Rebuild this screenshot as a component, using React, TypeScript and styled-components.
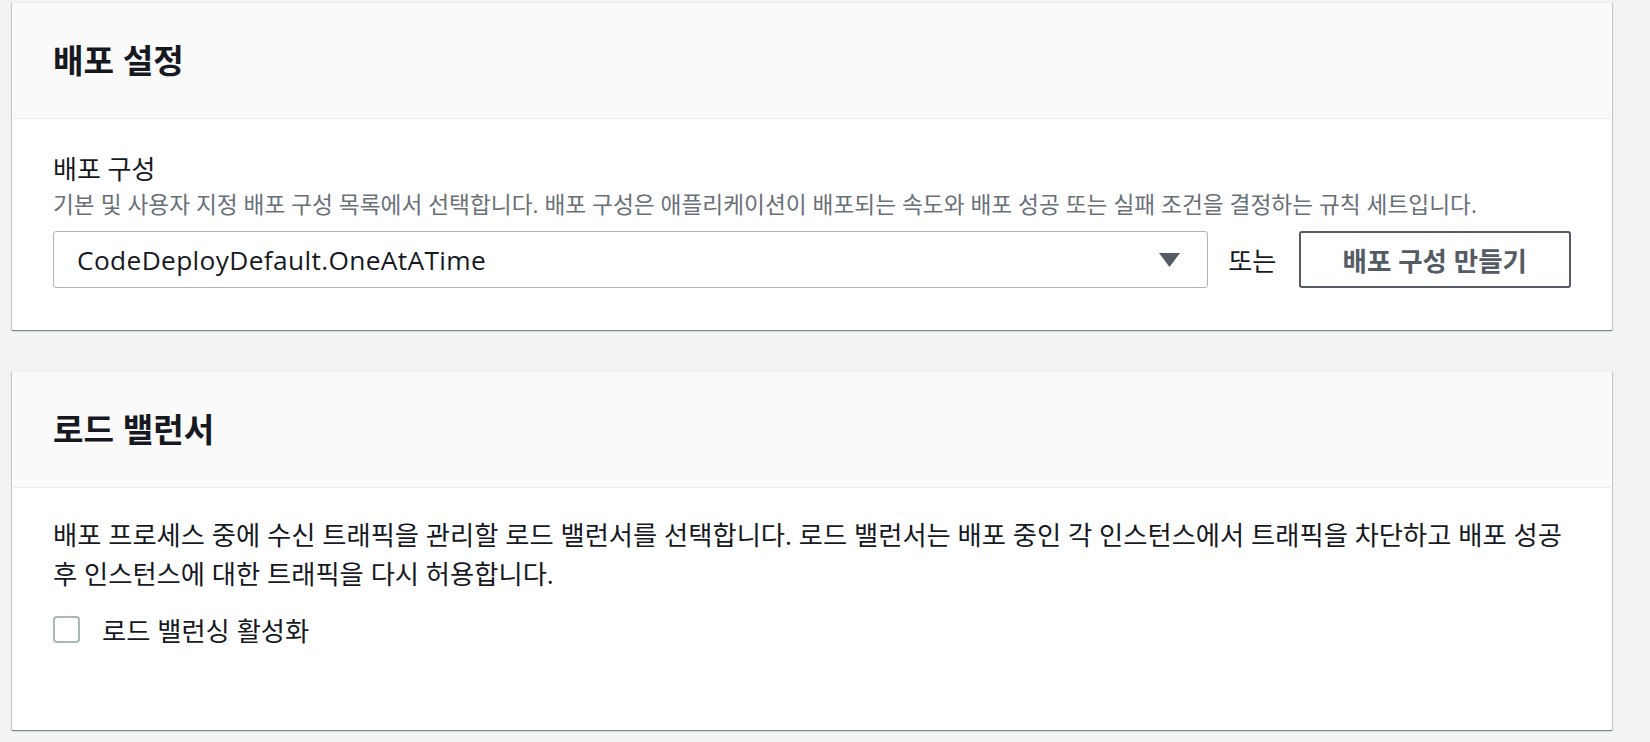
import styled, { createGlobalStyle } from 'styled-components';

const GlobalStyle = createGlobalStyle`
  html, body {
    margin: 0;
    background: #f2f3f3;
  }
  body {
    font-family: 'Open Sans', 'Noto Sans CJK KR', sans-serif;
    color: #16191f;
    word-break: keep-all;
  }
`;

const Page = styled.main`
  display: flex;
  flex-direction: column;
  gap: 41px;
  width: 1600px;
  padding: 2px 0 12px 12px;
`;

const Panel = styled.section`
  background: #fff;
  border-top: 1px solid #eaeded;
  box-shadow: 0 1px 1px 0 rgba(0, 28, 36, 0.3),
    1px 1px 1px 0 rgba(0, 28, 36, 0.15),
    -1px 1px 1px 0 rgba(0, 28, 36, 0.15);
`;

const PanelHeader = styled.header`
  background: #fafafa;
  border-bottom: 1px solid #eaeded;
  padding: 37.5px 41px;

  h2 {
    margin: 0;
    font-size: 33.2px;
    line-height: 40px;
    font-weight: 700;
    color: #16191f;
  }
`;

const PanelBody = styled.div<{ $top: number; $bottom: number }>`
  padding: ${(p) => p.$top}px 41px ${(p) => p.$bottom}px;
`;

const Label = styled.div`
  font-size: 26px;
  line-height: 36px;
`;

const Description = styled.div`
  margin-top: 4px;
  font-size: 22.7px;
  line-height: 28px;
  color: #687078;
`;

const FieldRow = styled.div`
  display: flex;
  align-items: center;
  margin-top: 12px;
`;

const Select = styled.div`
  flex: 1;
  display: flex;
  align-items: center;
  justify-content: space-between;
  height: 57px;
  box-sizing: border-box;
  padding: 0 27px 0 23px;
  border: 1px solid #aab7b8;
  border-radius: 3px;
  font-size: 26.3px;
  letter-spacing: 0.35px;
  color: #16191f;
`;

const Or = styled.span`
  margin: 0 22px 0 20px;
  font-size: 26.3px;
`;

const Button = styled.button`
  height: 57px;
  box-sizing: border-box;
  padding: 0 42px;
  border: 2px solid #545b64;
  border-radius: 3px;
  background: #fff;
  color: #545b64;
  font-family: inherit;
  font-size: 26.5px;
  font-weight: 700;
`;

const Paragraph = styled.p`
  margin: 0;
  font-size: 26.3px;
  line-height: 39px;
`;

const CheckRow = styled.label`
  display: flex;
  align-items: center;
  gap: 22px;
  margin-top: 16px;
  height: 39px;
  font-size: 26.3px;
`;

const Checkbox = styled.input`
  appearance: none;
  margin: 0;
  width: 27px;
  height: 27px;
  box-sizing: border-box;
  border: 2px solid #aab7b8;
  border-radius: 4px;
  background: #fff;
`;

export default function App() {
  return (
    <>
      <GlobalStyle />
      <Page>
        <Panel>
          <PanelHeader>
            <h2>배포 설정</h2>
          </PanelHeader>
          <PanelBody $top={32} $bottom={42}>
            <Label>배포 구성</Label>
            <Description>
              기본 및 사용자 지정 배포 구성 목록에서 선택합니다. 배포 구성은 애플리케이션이 배포되는 속도와 배포 성공 또는 실패 조건을 결정하는 규칙 세트입니다.
            </Description>
            <FieldRow>
              <Select>
                <span>CodeDeployDefault.OneAtATime</span>
                <svg width="21" height="14" viewBox="0 0 21 14">
                  <path d="M0 0H21L10.5 14Z" fill="#545b64" />
                </svg>
              </Select>
              <Or>또는</Or>
              <Button>배포 구성 만들기</Button>
            </FieldRow>
          </PanelBody>
        </Panel>

        <Panel>
          <PanelHeader>
            <h2>로드 밸런서</h2>
          </PanelHeader>
          <PanelBody $top={28} $bottom={81}>
            <Paragraph>
              배포 프로세스 중에 수신 트래픽을 관리할 로드 밸런서를 선택합니다. 로드 밸런서는 배포 중인 각 인스턴스에서 트래픽을 차단하고 배포 성공 후 인스턴스에 대한 트래픽을 다시 허용합니다.
            </Paragraph>
            <CheckRow>
              <Checkbox type="checkbox" />
              로드 밸런싱 활성화
            </CheckRow>
          </PanelBody>
        </Panel>
      </Page>
    </>
  );
}
